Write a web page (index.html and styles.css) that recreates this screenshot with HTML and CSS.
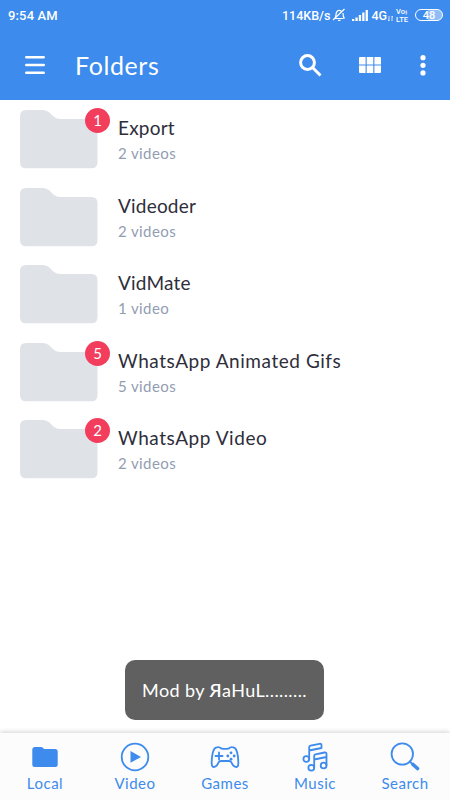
FILE: index.html
```html
<!DOCTYPE html>
<html lang="en">
<head>
<meta charset="utf-8">
<title>Folders</title>
<link rel="stylesheet" href="styles.css">
</head>
<body>
<svg class="defs" width="0" height="0"><symbol id="folder" viewBox="0 0 78 59"><path d="M6 0H22C32 0 31 9 41 9H71.500Q77.500 9 77.500 15V52Q77.500 58.300 71.500 58.300H6Q0 58.300 0 52V6Q0 0 6 0Z"/></symbol></svg>
<header class="header">
  <div class="status">
    <span class="clock">9:54 AM</span>
    <span class="speed">114KB/s</span>
    <svg class="bell" width="14" height="14" viewBox="0 0 14 14"><path d="M2.500 10.500H11.500M3 10C4.500 8 3.500 5 5 3.500Q7 1.200 9.500 3.500M11 5C11 8 11.500 9.500 12.500 10.500M6 12.300H8.500M1 12L12.500 1"/></svg>
    <svg class="signal" width="16" height="11" viewBox="0 0 16 11"><path d="M0 9h2.300V11H0zM3.400 7.500h2.300V11h-2.300zM6.800 5h2.300v6h-2.300zM10.200 2.500h2.300V11h-2.300zM13.600 0h2.300v11h-2.300z"/></svg>
    <span class="network">4G</span>
    <svg class="data" width="5" height="5" viewBox="0 0 5 5"><path d="M1 0V5M0 3.500L1 5M4 5V0M4 0L5 1.500"/></svg>
    <span class="volte"><span>Vo<i>≬</i></span><span>LTE</span></span>
    <span class="battery"><span>48</span></span>
  </div>
  <div class="toolbar">
    <svg class="menu" width="20" height="18" viewBox="0 0 20 18"><path d="M1.300 1.300H18.700M1.300 9H18.700M1.300 16.700H18.700"/></svg>
    <h1>Folders</h1>
    <svg class="find" width="23" height="23" viewBox="0 0 23 23"><circle cx="8.500" cy="8.500" r="6.900"/><path d="M13.500 13.500L21.500 21.500"/></svg>
    <svg class="tiles" width="22" height="16" viewBox="0 0 22 16"><path d="M1 0H6.600V7.400H0V1Q0 0 1 0ZM7.700 0H14.300V7.400H7.700ZM15.400 0H21Q22 0 22 1V7.400H15.400ZM0 8.600H6.600V16H1Q0 16 0 15ZM7.700 8.600H14.300V16H7.700ZM15.400 8.600H22V15Q22 16 21 16H15.400Z"/></svg>
    <svg class="more" width="6" height="21" viewBox="0 0 6 21"><circle cx="3" cy="2.700" r="2.600"/><circle cx="3" cy="10.300" r="2.600"/><circle cx="3" cy="17.900" r="2.600"/></svg>
  </div>
</header>
<main class="list">
  <div class="row"><div class="thumb"><svg><use href="#folder"/></svg><span class="badge">1</span></div><div class="info"><div class="name tight">Export</div><div class="count">2 videos</div></div></div>
  <div class="row"><div class="thumb"><svg><use href="#folder"/></svg></div><div class="info"><div class="name tight">Videoder</div><div class="count">2 videos</div></div></div>
  <div class="row"><div class="thumb"><svg><use href="#folder"/></svg></div><div class="info"><div class="name tight">VidMate</div><div class="count">1 video</div></div></div>
  <div class="row"><div class="thumb"><svg><use href="#folder"/></svg><span class="badge">5</span></div><div class="info"><div class="name">WhatsApp Animated Gifs</div><div class="count">5 videos</div></div></div>
  <div class="row"><div class="thumb"><svg><use href="#folder"/></svg><span class="badge">2</span></div><div class="info"><div class="name">WhatsApp Video</div><div class="count">2 videos</div></div></div>
</main>
<div class="toast">Mod by <b>Я</b>aHuL.........</div>
<nav class="tabs">
  <div class="tab"><svg width="30" height="30" viewBox="0 0 30 30"><path class="solid" d="M4.500 5H11Q13 5 14 7H25Q27.700 7 27.700 9.500V22.500Q27.700 25 25.200 25H4.800Q2.300 25 2.300 22.500V7.500Q2.300 5 4.500 5Z"/></svg><span>Local</span></div>
  <div class="tab"><svg width="30" height="30" viewBox="0 0 30 30"><circle cx="15" cy="15" r="13.300"/><path class="solid" d="M10.500 9L21 15L10.500 20.700Z"/></svg><span>Video</span></div>
  <div class="tab"><svg width="30" height="30" viewBox="0 0 30 30"><path d="M6.500 5.500Q9 4.300 11 6.300Q15 7.600 19 6.300Q21 4.300 23.500 5.500C27 5.500 28.500 15 28.300 21.500C28.300 27 23.500 25.500 21.500 20.500Q20.800 19 19 19H11Q9.200 19 8.500 20.500C6.500 25.500 1.700 27 1.700 21.500C1.500 15 3 5.500 6.500 5.500Z"/><path d="M5.500 14H12.500M9 10.500V17.500"/><g class="solid"><circle cx="21" cy="10.800" r="1.400"/><circle cx="21" cy="17.200" r="1.400"/><circle cx="17.800" cy="14" r="1.400"/><circle cx="24.200" cy="14" r="1.400"/></g></svg><span>Games</span></div>
  <div class="tab"><svg width="30" height="30" viewBox="0 0 30 30"><circle cx="6.300" cy="17" r="2.900"/><path d="M9.200 17V5.200Q9.200 4 10.500 3.700L19.500 1.800Q21.500 1.500 21.500 3.200V6L9.200 8.500"/><circle cx="11.300" cy="25.800" r="2.900"/><circle cx="23.600" cy="23.500" r="2.900"/><path d="M14.200 25.500V13.800Q14.200 12.700 15.500 12.400L24.500 10.500Q26.500 10.200 26.500 12V23M14.200 17.500L26.500 15"/></svg><span>Music</span></div>
  <div class="tab"><svg width="30" height="30" viewBox="0 0 30 30"><circle cx="12.300" cy="12" r="10.700"/><path d="M19.800 19.500L22 21.700"/><path class="handle" d="M23 22.500L27.500 26.500"/></svg><span>Search</span></div>
</nav>
</body>
</html>
```
FILE: styles.css
```css
* { box-sizing: border-box; }
body { margin: 0; width: 450px; height: 800px; overflow: hidden; display: flex; flex-direction: column; background: #fff; font-family: Lato, "Noto Sans", sans-serif; }
svg { display: block; flex: none; }
.defs { position: absolute; }
.header { height: 100px; flex: none; background: #3c8bed; color: #fff; }
.status { height: 30px; padding: 0 7px 0 8px; display: flex; align-items: center; font: 500 13px Roboto, sans-serif; }
.clock { letter-spacing: .15px; }
.speed { margin-left: auto; font-size: 12.500px; }
.bell { margin-left: 2px; fill: none; stroke: #fff; stroke-width: 1.200; }
.signal { margin-left: 6px; fill: #fff; }
.network { margin-left: 3px; font-size: 12.500px; }
.data { margin: 7px 0 0 1px; fill: none; stroke: #fff; stroke-width: .8; }
.volte { margin-left: 3px; width: 14px; display: flex; flex-direction: column; font-size: 7.500px; line-height: 7px; }
.volte i { font-style: normal; font-size: 5px; }
.battery { margin-left: 5px; width: 28px; height: 12px; border: 1px solid #fff; border-radius: 6px; display: flex; align-items: center; justify-content: center; font-size: 11px; background: linear-gradient(90deg, #3c8bed 48%, #8fbdf5 48%); }
.toolbar { height: 70px; padding: 0 24px 0 25px; display: flex; align-items: center; }
.menu { stroke: #fff; stroke-width: 2.600; stroke-linecap: round; }
.toolbar h1 { margin: 0 0 0 30px; font-size: 25px; line-height: 32px; font-weight: 400; letter-spacing: .6px; }
.find { margin-left: auto; fill: none; stroke: #fff; stroke-width: 3; }
.tiles { margin-left: 37px; fill: #fff; }
.more { margin-left: 39px; fill: #fff; }
.list { flex: 1; padding: 10px 20px 0; }
.row { height: 77.600px; display: flex; }
.thumb { position: relative; width: 78px; height: 59px; }
.thumb svg { width: 78px; height: 59px; fill: #dfe2e7; }
.badge { position: absolute; left: 65px; top: -2px; width: 25px; height: 25px; border-radius: 50%; background: #f23d5c; color: #fff; font-size: 15px; line-height: 25px; text-align: center; }
.info { margin-left: 20px; padding-top: 5px; white-space: nowrap; }
.name { font-size: 19px; line-height: 26px; color: #2e2e3a; letter-spacing: .55px; }
.name.tight { letter-spacing: .2px; }
.count { font-size: 15px; line-height: 25px; color: #929db2; letter-spacing: .4px; }
.toast { position: absolute; left: 125px; top: 660px; width: 199px; height: 60px; border-radius: 10px; background: #606060; color: #fff; font-size: 18px; line-height: 61px; letter-spacing: .4px; text-align: center; white-space: nowrap; }
.toast b { font-weight: 600; }
.tabs { height: 67px; flex: none; display: flex; background: #fcfcfc; box-shadow: 0 -1px 5px rgba(0,0,0,.18); color: #3c8bed; }
.tab { flex: 1; padding-top: 9px; display: flex; flex-direction: column; align-items: center; font-size: 15px; line-height: 22px; letter-spacing: .5px; }
.tab svg { fill: none; stroke: #3c8bed; stroke-width: 1.800; stroke-linecap: round; stroke-linejoin: round; }
.tab .solid { fill: #3c8bed; stroke: none; }
.tab .handle { stroke-width: 3.600; }
```
